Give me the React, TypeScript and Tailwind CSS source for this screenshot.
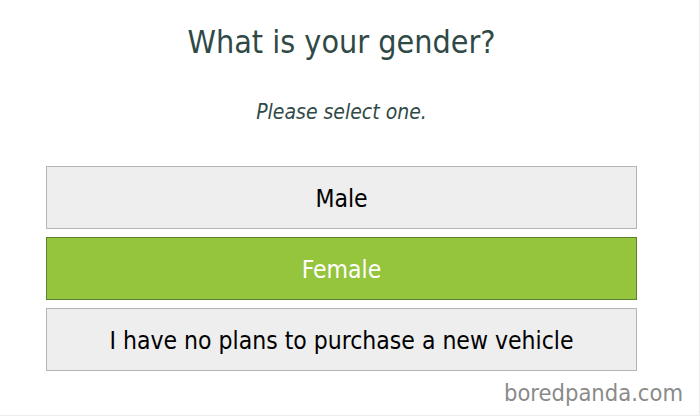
export default function App() {
  const options = [
    { label: "Male", selected: false },
    { label: "Female", selected: true },
    { label: "I have no plans to purchase a new vehicle", selected: false },
  ];

  return (
    <div
      className="relative h-[416px] w-[700px] overflow-hidden border-r border-b border-[#ececec] bg-white"
      style={{ fontFamily: '"DejaVu Sans Condensed", "DejaVu Sans", sans-serif' }}
    >
      <div className="flex flex-col items-center pt-[22px] pl-[46px] pr-[62px]">
        <h1 className="text-[32px] leading-[40px] text-[#2f4a46]">What is your gender?</h1>
        <p className="mt-[37px] text-[21px] italic leading-[26px] text-[#2f4a46]">Please select one.</p>
      </div>
      <div className="mt-[41px] flex flex-col gap-[8px] pl-[46px] pr-[62px]">
        {options.map((o) => (
          <button
            key={o.label}
            className={
              o.selected
                ? "flex h-[63px] items-center justify-center border border-[#5b7f2a] bg-[#95c43d] pt-[4px] text-[24.5px] text-white"
                : "flex h-[63px] items-center justify-center border border-[#b4b4b4] bg-[#eeeeee] pt-[4px] text-[24.5px] text-black"
            }
          >
            {o.label}
          </button>
        ))}
      </div>
      <div className="absolute bottom-[10px] right-[16px] text-[23.5px] leading-none text-[#8a8a8a]">
        boredpanda.com
      </div>
    </div>
  );
}
